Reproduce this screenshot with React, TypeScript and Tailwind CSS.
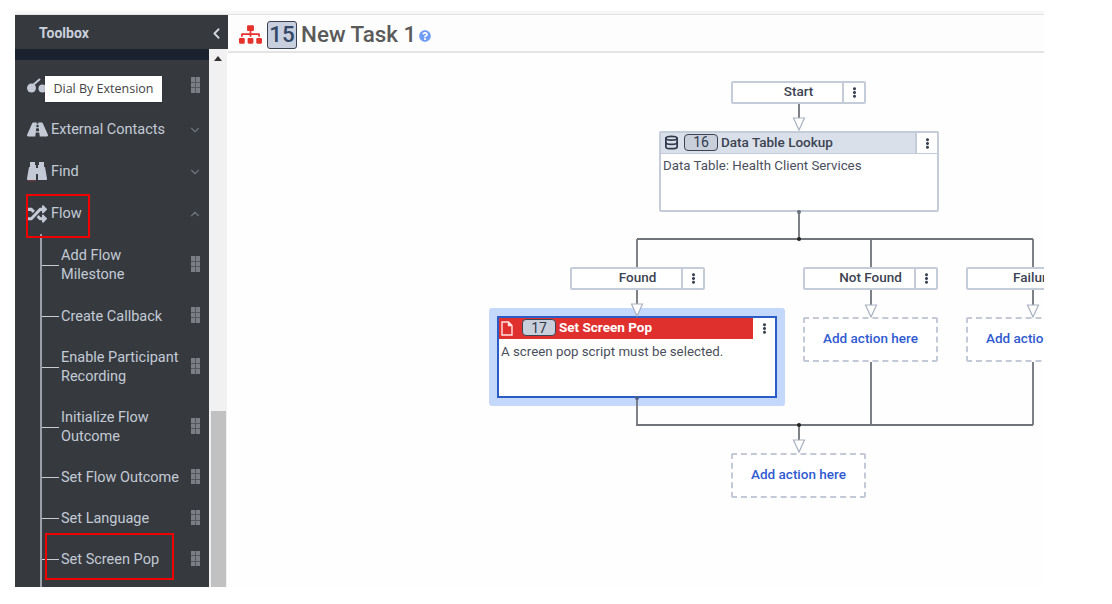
import { FaEllipsisV, FaQuestionCircle, FaRandom, FaRoad, FaSitemap } from "react-icons/fa";
import { LuChevronDown, LuChevronLeft, LuChevronUp, LuDatabase } from "react-icons/lu";
import type { ReactNode } from "react";

const flowItems = [
  { lines: ["Add Flow", "Milestone"], height: "h-[60px]" },
  { lines: ["Create Callback"], height: "h-[42px]" },
  { lines: ["Enable Participant", "Recording"], height: "h-[60px]" },
  { lines: ["Initialize Flow", "Outcome"], height: "h-[60px]" },
  { lines: ["Set Flow Outcome"], height: "h-[41px]" },
  { lines: ["Set Language"], height: "h-[41px]" },
  { lines: ["Set Screen Pop"], height: "h-[41px]" },
];

function DragHandle() {
  return (
    <div className="mb-[2px] ml-auto grid w-[9px] shrink-0 grid-cols-2 gap-px bg-[#54585d]">
      {[0, 1, 2, 3, 4, 5].map((i) => (
        <span key={i} className="h-[4.5px] w-[4px] bg-[#7b7f85]" />
      ))}
    </div>
  );
}

function Binoculars() {
  return (
    <svg width="20" height="20" viewBox="0 0 20 20" fill="currentColor">
      <path d="M3 0h5v3h1v15H0.5V18Q0 18 0 16.5L2 5h1Z" />
      <path d="M12 0h5v5h1l2 11.5Q20 18 19.5 18H11V3h1Z" />
      <rect x="9" y="6" width="2" height="6" />
      <path d="M0.5 18h8.5v1.5H0.5Z" fill="#8c3a40" opacity="0.5" />
    </svg>
  );
}

function Category({ icon, label, open }: { icon: ReactNode; label: string; open?: boolean }) {
  return (
    <div className="flex h-[42px] items-center pl-[12px] pr-[7px] pt-px">
      <span className="flex w-[24px] shrink-0 items-center text-[#c3cad6]">{icon}</span>
      <span className="text-[14.5px] text-[#c3cad6]">{label}</span>
      <span className="ml-auto text-[#6f747b]">
        {open ? <LuChevronUp size={14} /> : <LuChevronDown size={14} />}
      </span>
    </div>
  );
}

function Sidebar() {
  return (
    <aside className="relative flex w-[213px] shrink-0 flex-col">
      <div className="flex h-[34px] shrink-0 items-center justify-between bg-[#363a3f] pl-[24px] pr-[3px] pt-[2px]">
        <span className="text-[14px] font-bold text-[#c9d0dc]">Toolbox</span>
        <LuChevronLeft size={17} className="text-[#d3d8e0]" strokeWidth={2.5} />
      </div>
      <div className="flex min-h-0 flex-1">
        <div className="w-[194px] shrink-0 overflow-hidden bg-[#363a3f]">
          <div className="h-[11px] bg-[#1a2230]" />
          <div className="flex h-[48px] items-center pl-[12px] pr-[9px] pt-[4px]">
            <svg width="20" height="16" viewBox="0 0 20 16" className="text-[#c3cad6]">
              <circle cx="4.5" cy="10" r="4.5" fill="currentColor" />
              <circle cx="15.5" cy="10.5" r="4" fill="currentColor" />
              <path d="M6 7 L13 1" stroke="currentColor" strokeWidth="2" />
            </svg>
            <DragHandle />
          </div>
          <Category icon={<FaRoad size={21} />} label="External Contacts" />
          <Category icon={<Binoculars />} label="Find" />
          <Category icon={<FaRandom size={20} />} label="Flow" open />
          <div className="ml-[25px] border-l-2 border-[#9a9fa8] pb-[40px] pt-px">
            {flowItems.map((item) => (
              <div key={item.lines[0]} className={`flex items-center pr-[9px] ${item.height}`}>
                <span className="mr-[2px] h-px w-[17px] shrink-0 bg-[#c8ccd2]" />
                <span className="text-[14.5px] leading-[19px] text-[#c3cad6]">
                  {item.lines.map((line) => (
                    <span key={line} className="block whitespace-nowrap">
                      {line}
                    </span>
                  ))}
                </span>
                <DragHandle />
              </div>
            ))}
          </div>
        </div>
        <div className="flex w-[18px] shrink-0 flex-col items-center justify-between bg-[#f1f1f1]">
          <span className="mt-[7px] h-0 w-0 border-x-[4px] border-b-[5px] border-x-transparent border-b-[#333]" />
          <span className="h-[176px] w-[15px] bg-[#c1c1c1]" />
        </div>
      </div>
      <div className="absolute left-[30px] top-[61px] flex h-[26px] w-[117px] items-center justify-center bg-white font-['Open_Sans',sans-serif] text-[12.5px] text-[#444] shadow-sm">
        Dial By Extension
      </div>
      <div className="absolute left-[11px] top-[179px] h-[44px] w-[64px] border-2 border-[#f00000]" />
      <div className="absolute left-[30px] top-[518px] h-[47px] w-[129px] border-2 border-[#f00000]" />
    </aside>
  );
}

function MenuButton({ className }: { className: string }) {
  return (
    <div className={`flex w-[22px] shrink-0 items-center justify-center bg-white text-[#3a4250] ${className}`}>
      <FaEllipsisV size={11} />
    </div>
  );
}

function BranchNode({ label, className }: { label: string; className: string }) {
  return (
    <div className={`absolute flex h-[23px] w-[135px] rounded-[2px] border-2 border-[#c4ccd9] bg-white ${className}`}>
      <div className="flex-1 whitespace-nowrap pl-[22px] text-center text-[13.5px] font-medium leading-[17px] text-[#3c4352]">{label}</div>
      <MenuButton className="border-l-2 border-[#c4ccd9]" />
    </div>
  );
}

function AddAction({ className }: { className: string }) {
  return (
    <div
      className={`absolute flex h-[45px] w-[135px] items-center justify-center whitespace-nowrap rounded-[2px] border-2 border-dashed border-[#c3c9d6] bg-white pb-[3px] text-[13.5px] font-medium text-[#2f5bd0] ${className}`}
    >
      Add action here
    </div>
  );
}

function Badge({ value }: { value: number }) {
  return (
    <span className="flex h-[17px] w-[34px] shrink-0 items-center justify-center rounded-[4px] border border-[#3c4352] bg-[#c8cfdb] text-[14px] leading-none text-[#2f3a4c]">
      {value}
    </span>
  );
}

function Connectors() {
  const line = "#70757b";
  const arrows = [
    [571, 65],
    [409, 251],
    [643, 252],
    [805, 252],
    [571, 387],
  ];
  return (
    <svg width="816" height="534" className="absolute left-0 top-0" fill="none">
      <path
        d="M571 51V66M571 159V186M409 186H805M409 186V214M643 186V214M805 186V214M409 237V252M643 237V253M805 237V253M409 345V372H805M643 309V372M805 309V372M571 372V388"
        stroke={line}
        strokeWidth="1.8"
      />
      {arrows.map(([x, y]) => (
        <path key={`${x}-${y}`} d={`M${x - 5.5} ${y}H${x + 5.5}L${x} ${y + 12}Z`} fill="#fff" stroke="#a9b2c2" strokeWidth="1.2" />
      ))}
      <circle cx="571" cy="186" r="2" fill="#222" />
      <circle cx="571" cy="372" r="2" fill="#222" />
      <circle cx="571" cy="159" r="2" fill="#6a7180" />
      <circle cx="409" cy="345" r="2" fill="#4a5f8a" />
    </svg>
  );
}

function Canvas() {
  return (
    <div className="relative flex-1 overflow-hidden bg-[#fefefe]">
      <BranchNode label="Start" className="left-[503px] top-[28px]" />

      <div className="absolute left-[431px] top-[78px] flex h-[81px] w-[280px] flex-col rounded-[2px] border-2 border-[#c4ccd9] bg-white">
        <div className="flex h-[21px] shrink-0 border-b border-[#c4ccd9] bg-[#d9e0e9]">
          <div className="flex flex-1 items-center pb-[2px] pl-[3px] text-[#2f3a4c]">
            <LuDatabase size={15} strokeWidth={2.8} className="mr-[5px] shrink-0" />
            <Badge value={16} />
            <span className="ml-[3px] whitespace-nowrap text-[13.5px] font-medium text-[#3c4352]">Data Table Lookup</span>
          </div>
          <MenuButton className="border-l-2 border-[#c4ccd9]" />
        </div>
        <div className="px-[2px] pt-[3px] text-[13.3px] leading-[18px] text-[#4a4f5c]">Data Table: Health Client Services</div>
      </div>

      <BranchNode label="Found" className="left-[342px] top-[214px]" />
      <BranchNode label="Not Found" className="left-[575px] top-[214px]" />
      <BranchNode label="Failure" className="left-[738px] top-[214px]" />

      <div className="absolute left-[261px] top-[255px] rounded-[3px] bg-[#c4d8fb] p-[8px]">
        <div className="flex h-[82px] w-[280px] flex-col border-2 border-[#2a5cc8] bg-white">
          <div className="flex h-[21px] shrink-0 bg-[#e0302d]">
            <div className="flex flex-1 items-center pb-[2px] pl-[2px]">
              <svg width="12" height="15" viewBox="0 0 12 15" fill="none" stroke="#ffe3e3" strokeWidth="1.4" className="mr-[9px] mt-[2px] shrink-0">
                <path d="M1 1h6.5L11 4.5V14H1Z" />
                <path d="M7.5 1v3.5H11" fill="#ffe3e3" />
              </svg>
              <Badge value={17} />
              <span className="ml-[3px] whitespace-nowrap text-[13.5px] font-bold text-white">Set Screen Pop</span>
            </div>
            <MenuButton className="" />
          </div>
          <div className="px-[2px] pt-[4px] text-[13.3px] leading-[18px] text-[#4a4f5c]">A screen pop script must be selected.</div>
        </div>
      </div>

      <AddAction className="left-[575px] top-[264px]" />
      <AddAction className="left-[738px] top-[264px]" />
      <AddAction className="left-[503px] top-[400px]" />
      <Connectors />
    </div>
  );
}

export default function App() {
  return (
    <div className="h-[604px] w-[1112px] overflow-hidden bg-white pl-[15px] pt-[11px] font-['Roboto',sans-serif]">
      <div className="w-[1029px]">
        <div className="h-[4px] border-b border-[#e2e2e2] bg-[#f6f6f6]" />
        <div className="flex h-[572px]">
          <Sidebar />
          <main className="flex min-w-0 flex-1 flex-col">
            <header className="flex h-[38px] shrink-0 items-center border-b-2 border-[#e4e4e4] bg-[#fdfdfd] pl-[11px] pt-[3px]">
              <FaSitemap size={23} className="mr-[5px] text-[#e5322d]" />
              <span className="mr-[4px] flex h-[28px] w-[30px] items-center justify-center rounded-[3px] border border-[#3c4352] bg-[#c8cfdf] text-[22.4px] font-medium text-[#334766]">
                15
              </span>
              <span className="mr-[3px] whitespace-nowrap text-[22.4px] font-medium text-[#5a5a5a]">New Task 1</span>
              <FaQuestionCircle size={12} className="mt-[2px] text-[#6f9cf5]" />
            </header>
            <Canvas />
          </main>
        </div>
      </div>
    </div>
  );
}
